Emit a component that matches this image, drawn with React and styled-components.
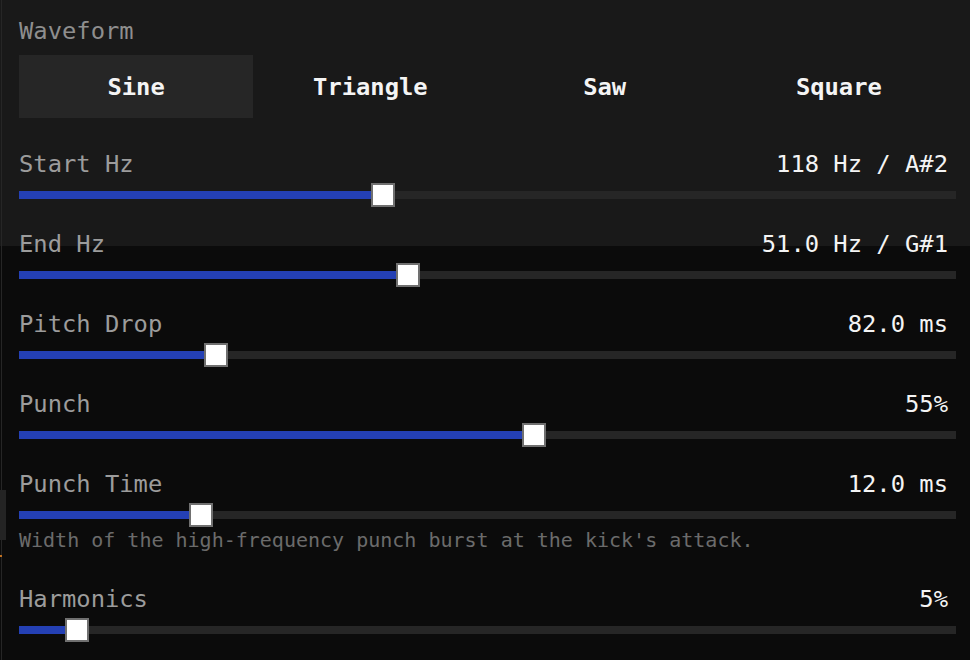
import React, { useState } from 'react';
import styled, { createGlobalStyle } from 'styled-components';

const GlobalStyle = createGlobalStyle`
  html, body {
    margin: 0;
    padding: 0;
    background: #0b0b0b;
  }
  body {
    font-family: "DejaVu Sans Mono", "Liberation Mono", monospace;
  }
`;

const Page = styled.div`
  position: relative;
  min-height: 660px;
  background: linear-gradient(#191919 0, #191919 246px, #0b0b0b 246px);
  overflow: hidden;
`;

const Panel = styled.div`
  margin-left: 1px;
  border-left: 1px solid #262626;
  padding: 18px 14px 20px 17px;
  display: flex;
  flex-direction: column;
`;

const SectionLabel = styled.div`
  font-size: 23.8px;
  line-height: 26px;
  color: #8e8e8e;
`;

const Segmented = styled.div`
  display: grid;
  grid-template-columns: repeat(4, 1fr);
  margin-top: 11px;
  margin-bottom: 33px;
`;

const SegButton = styled.button`
  height: 63px;
  border: none;
  background: ${p => (p.$active ? '#262626' : 'transparent')};
  color: #f4f4f4;
  font-family: inherit;
  font-size: 23.8px;
  font-weight: bold;
  cursor: pointer;
  padding: 0;
`;

const Row = styled.div`
  display: flex;
  flex-direction: column;
  margin-bottom: 24px;
`;

const Header = styled.div`
  display: flex;
  justify-content: space-between;
  align-items: baseline;
  font-size: 23.8px;
  line-height: 26px;
`;

const Label = styled.span`
  color: #9c9c9c;
`;

const Value = styled.span`
  color: #f4f4f4;
  margin-right: 8px;
`;

const SliderBox = styled.div`
  position: relative;
  height: 24px;
  margin-top: 6px;
  display: flex;
  align-items: center;
`;

const Track = styled.div`
  position: relative;
  width: 100%;
  height: 8px;
  background: #262626;
`;

const Fill = styled.div`
  height: 100%;
  background: #2440b4;
`;

const Thumb = styled.div`
  position: absolute;
  top: 0;
  width: 24px;
  height: 24px;
  box-sizing: border-box;
  background: #ffffff;
  border: 2px solid #707070;
`;

const Description = styled.div`
  font-size: 20px;
  line-height: 20px;
  color: #6b6b6b;
  margin-top: 3px;
  margin-bottom: 12px;
`;

const ScrollMark = styled.div`
  position: absolute;
  left: 0;
  top: 490px;
  width: 6px;
  height: 50px;
  background: #242424;
`;

const Tick = styled.div`
  position: absolute;
  left: 0;
  top: 555px;
  width: 2px;
  height: 2px;
  background: #c07020;
`;

const params = [
  { name: 'Start Hz', value: '118 Hz / A#2', pos: 0.3855 },
  { name: 'End Hz', value: '51.0 Hz / G#1', pos: 0.4129 },
  { name: 'Pitch Drop', value: '82.0 ms', pos: 0.2026 },
  { name: 'Punch', value: '55%', pos: 0.5509 },
  {
    name: 'Punch Time',
    value: '12.0 ms',
    pos: 0.1862,
    help: "Width of the high-frequency punch burst at the kick's attack.",
  },
  { name: 'Harmonics', value: '5%', pos: 0.0504 },
];

const waves = ['Sine', 'Triangle', 'Saw', 'Square'];

const Slider = ({ pos }) => (
  <SliderBox>
    <Track>
      <Fill style={{ width: `calc((100% - 24px) * ${pos})` }} />
    </Track>
    <Thumb style={{ left: `calc((100% - 24px) * ${pos})` }} />
  </SliderBox>
);

export default function App() {
  const [wave, setWave] = useState('Sine');

  return (
    <Page>
      <GlobalStyle />
      <Panel>
        <SectionLabel>Waveform</SectionLabel>
        <Segmented>
          {waves.map(w => (
            <SegButton key={w} $active={w === wave} onClick={() => setWave(w)}>
              {w}
            </SegButton>
          ))}
        </Segmented>

        {params.map(p => (
          <Row key={p.name}>
            <Header>
              <Label>{p.name}</Label>
              <Value>{p.value}</Value>
            </Header>
            <Slider pos={p.pos} />
            {p.help && <Description>{p.help}</Description>}
          </Row>
        ))}
      </Panel>
      <ScrollMark />
      <Tick />
    </Page>
  );
}
